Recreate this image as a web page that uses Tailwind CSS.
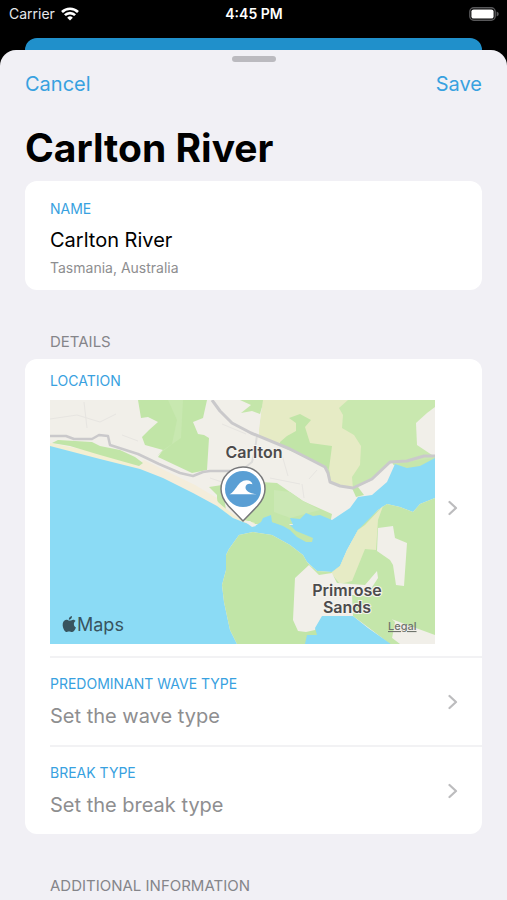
<!DOCTYPE html>
<html lang="en">
  <head>
    <meta charset="UTF-8" />
    <meta name="viewport" content="width=device-width, initial-scale=1.0" />
    <title>Carlton River</title>
    <script src="https://cdn.jsdelivr.net/npm/@tailwindcss/browser@4"></script>
  </head>
  <body class="bg-black font-[Inter,sans-serif]">
    <div class="flex min-h-screen flex-col">
      <!-- Status bar -->
      <header class="grid h-7 grid-cols-3 items-center pr-2 pl-[9px] text-sm text-white">
        <div class="flex items-center gap-[6px] text-gray-200">
          <span>Carrier</span>
          <svg class="h-[14px] w-[18px]" viewBox="0 0 18 14" fill="none" stroke="#fff" stroke-width="2.6" role="img" aria-label="Wi-Fi">
            <path d="M1 5a11.4 11.4 0 0 1 16 0" />
            <path d="M3.9 8.2a7.2 7.2 0 0 1 10.2 0" />
            <path d="M9 13.6 6.2 10.7a4 4 0 0 1 5.6 0Z" fill="#fff" stroke="none" />
          </svg>
        </div>
        <div class="text-center font-semibold whitespace-nowrap">4:45 PM</div>
        <svg class="h-[14px] w-[30px] justify-self-end" viewBox="0 0 30 14" role="img" aria-label="Battery full">
          <rect x=".8" y=".8" width="25.4" height="12.4" rx="4" fill="none" stroke="#58585a" stroke-width="1.4" />
          <rect x="2.4" y="2.4" width="22.2" height="9.2" rx="2.2" fill="#fff" />
          <path d="M27.6 4.6q2.2.8 2.2 2.4t-2.2 2.4z" fill="#58585a" />
        </svg>
      </header>

      <!-- Screen behind the sheet -->
      <div class="mx-[25px] mt-[10px] h-3 rounded-t-xl bg-[#2090cb]"></div>

      <!-- Sheet -->
      <main class="flex-1 rounded-t-2xl bg-[#f1f0f5] px-[25px] pt-[6px]">
        <div class="mx-auto h-[6px] w-11 rounded-full bg-[#bbbabf]"></div>

        <nav class="mt-2 flex justify-between text-xl leading-7 text-[#38a1e0]">
          <button type="button">Cancel</button>
          <button type="button">Save</button>
        </nav>

        <h1 class="mt-[25px] text-[39px] leading-[50px] font-bold text-black">Carlton River</h1>

        <section class="mt-2 rounded-xl bg-white px-[25px] pt-[18px] pb-3">
          <h2 class="text-sm text-[#38a1e0]">NAME</h2>
          <p class="mt-[9px] text-xl leading-6 text-black">Carlton River</p>
          <p class="mt-[6px] text-sm text-[#8e8e90]">Tasmania, Australia</p>
        </section>

        <h2 class="mt-[42px] px-[25px] text-[15px] leading-5 text-[#85858a]">DETAILS</h2>
        <section class="mt-[7px] rounded-xl bg-white pl-[25px]">
          <button type="button" class="flex w-full items-center border-b-2 border-[#f2f2f4] pt-3 pr-6 pb-3 text-left">
            <span class="flex-1">
              <span class="block text-sm text-[#38a1e0]">LOCATION</span>
              <svg class="mt-[9px] block w-full" viewBox="0 0 385 244" role="img" aria-label="Map of Carlton and Primrose Sands">
                <rect width="385" height="244" fill="#f1efe9" />

                <!-- Parks and farmland -->
                <path d="M88 0 91 18 98 17 108 22 99 30 92 37 95 45 113 50 108 57 125 65 142 73 157 70 159 38 154 35 148 34 143 22 153 18 157 0Z" fill="#c1e5a7" />
                <path d="M118 0H133L131 38 121 45 107 56 113 50 122 44 127 20Z" fill="#c8e8b0" />
                <path d="M190 0H214L210 14 202 11 191 13 201 5Z" fill="#c4e6aa" />
                <path d="M213 0H385V66L352 67 338 64 320 82 303 88 281 80 275 67 209 36Z" fill="#c9e8af" />
                <path d="M213 0H298L289 8 293 15 292 28 304 35 311 46 310 65 302 77 303 89 281 82 279 68 209 35 209 30Z" fill="#e6ebc5" />
                <path d="M239 18 250 14 261 20 255 27 260 43 282 46 279 69 230 45 230 42 237 36 246 31 246 23Z" fill="#c1e5a7" />
                <path d="M385 7 377 13 366 23 367 45 376 51 385 57Z" fill="#f1efe9" />
                <path d="M346 64 385 58V72H350Z" fill="#c6e6ab" />
                <path d="M303 89 320 81 342 62 345 68 338 90 318 98 309 96Z" fill="#f1efe9" />
                <path d="M302 88 308 87 314 95 306 97Z" fill="#c1e5a7" />
                <path d="M211 82 227 83 240 92 253 101 282 114 280 124 190 124 193 112 202 100Z" fill="#c4e6aa" />
                <path d="M224 90 240 92 253 101 270 110 240 118 224 112Z" fill="#cbe8b4" />
                <path d="M159 87 172 85 176 110 167 101 167 95Z" fill="#c1e5a7" />

                <!-- Beach and dunes -->
                <path d="M0 43 40 51 86 64 91 67 115 76 140 85 166 101 188 118 205 123 202 128 160 105 110 78 0 48Z" fill="#f3efd2" />
                <path d="M84 66 94 60 110 68 145 85 167 98 168 106 160 103Z" fill="#f4eddb" />
                <path d="M2 43 8 40 42 42 50 46 70 50 85 57 93 63 89 66 50 55 20 46Z" fill="#c1e5a7" />

                <!-- Minor streets -->
                <g fill="none" stroke="#e7e5e1">
                  <path d="M0 19 27 15 50 22 66 14M34 2 37 28M72 35 88 41M220 78 250 84M252 84 254 98M267 70 259 79M160 78 178 84M172 24 196 34M232 55 238 76" />
                  <path d="M207 35 205 50 202 62 192 70" stroke="#dddcda" stroke-width="2" />
                </g>

                <!-- Main roads -->
                <g fill="none" stroke="#cac9cb" stroke-width="3" stroke-linejoin="round">
                  <path d="M0 36H16L24 39 42 39 49 35 58 36 60 45 88 54 109 64 130 73 143 76 153 72 160 71 180 71" stroke-width="2.500" />
                  <path d="M162 0 170 11 182 23 201 33 240 49 275 67 278 73 280 82 290 86 303 88 322 79 340 62 357 61 374 56 385 56" />
                </g>

                <!-- Sea and river -->
                <path d="M0 46 50 59 90 69 113 78 143 93 167 106 183 118 193 122 205 126 211 122 213 118 221 115 222 122 233 125 243 125 240 118 250 119 256 113 263 116 270 115 282 120 300 108 308 97 322 95 337 82 345 64 357 68 370 66 385 58V98L370 104 363 112 350 107 337 104 328 110 316 124 308 130 297 150 290 166 282 172 267 171 257 162 253 155 240 145 222 135 203 132 189 135 179 149 176 155 176 170 172 185 174 202 180 230 187 244H0Z" fill="#8bdbf5" />
                <path d="M194 121 200 121 206 126 202 127Z" fill="#f1efe9" />
                <path d="M222 114 238 117 239 124 246 131 263 138 262 142 256 142 247 137 240 130 233 126 222 122Z" fill="#c4e6aa" />

                <!-- Southern shore -->
                <path d="M189 135 203 132 222 135 240 145 253 155 257 162 275 180 290 215V244H187L180 230 174 202 172 185 176 170 176 155 179 149Z" fill="#c1e5a7" />
                <path d="M308 130 328 110 337 104 350 107 363 112 370 104 385 98V244H340L303 215 270 215 262 167 267 171 282 172 290 166Z" fill="#c4e6aa" />
                <path d="M315 125 333 106 328 120 326 150 315 149 302 181 290 184 281 173 290 166 297 150 308 130Z" fill="#e6ebc5" />
                <path d="M328 128 343 126 345 138 357 143 354 186 346 185 343 165 340 160 327 151Z" fill="#f1efe9" />
                <path d="M245 178 259 165 269 175 282 173 287 183 315 185 327 171 328 178 317 195 313 215 272 217 265 230 256 232 248 231 243 220Z" fill="#f1efe9" />
                <path d="M333 216 385 235V244H350L333 231Z" fill="#f1efe9" />
                <path d="M255 244 257 235 267 235 265 228 272 216 303 216 318 228 341 244Z" fill="#8bdbf5" />
                <path d="M302 195 318 196 345 222 341 244 303 216Z" fill="#c4e6aa" />

                <!-- Pin -->
                <path d="M193 121 178.500 106C174 101 171 96 171 89a22 22 0 0 1 44 0c0 7-3 12-7.500 17Z" fill="#fff" stroke="#77787a" stroke-width="1.5" stroke-linejoin="round" />
                <circle cx="193" cy="89" r="18" fill="#5a9fd4" />
                <path d="M179.500 94.200C186 92 187.500 80.500 196.500 80.300 200 80.200 202 82 202.500 84.300 198.500 82.800 195.500 84.500 195.500 87.500 195.500 91 199.500 93.200 206.500 94.200Z" fill="#fff" />

                <!-- Labels -->
                <g class="font-[Inter,sans-serif] font-semibold" fill="#4c4b4c" stroke="#f5f3ee" stroke-width="2" paint-order="stroke" text-anchor="middle" font-size="16">
                  <text x="204" y="58">Carlton</text>
                  <text x="297" y="196">Primrose<tspan x="297" dy="17">Sands</tspan></text>
                </g>
                <path d="M21 220.500C23 219 25 219.800 25.500 221 23 222.500 23.600 226.500 26 227.500 25 230 23.500 232 22 232 20.800 232 20.400 231.400 19 231.400S17.300 232 16.200 232C14 231.500 10.500 223.500 14.500 220.400 16.500 219 18 220.400 19 220.600S20.500 220.600 21 220.500ZM18.800 219.800C18.600 218 20 216.200 22 216 22.200 218 20.600 219.800 18.800 219.800Z" fill="#38545f" />
                <text x="27" y="231" class="font-[Inter,sans-serif]" font-size="18" fill="#38545f">Maps</text>
                <text x="338" y="230" class="font-[Inter,sans-serif] underline" font-size="11" font-weight="500" fill="#6f746c">Legal</text>
              </svg>
            </span>
            <svg class="ml-[13px] h-4 w-[10px]" viewBox="0 0 10 16" fill="none" stroke="#bcbcbe" stroke-width="2.2" stroke-linecap="round" stroke-linejoin="round" aria-hidden="true">
              <path d="M1.500 2 8 8l-6.500 6" />
            </svg>
          </button>

          <button type="button" class="flex w-full items-center justify-between border-b-2 border-[#f2f2f4] pt-4 pr-6 pb-[15px] text-left">
            <span>
              <span class="block text-sm text-[#38a1e0]">PREDOMINANT WAVE TYPE</span>
              <span class="mt-2 block text-xl text-[#8e8e90]">Set the wave type</span>
            </span>
            <svg class="h-4 w-[10px]" viewBox="0 0 10 16" fill="none" stroke="#bcbcbe" stroke-width="2.2" stroke-linecap="round" stroke-linejoin="round" aria-hidden="true">
              <path d="M1.500 2 8 8l-6.500 6" />
            </svg>
          </button>

          <button type="button" class="flex w-full items-center justify-between pt-4 pr-6 pb-[15px] text-left">
            <span>
              <span class="block text-sm text-[#38a1e0]">BREAK TYPE</span>
              <span class="mt-2 block text-xl text-[#8e8e90]">Set the break type</span>
            </span>
            <svg class="h-4 w-[10px]" viewBox="0 0 10 16" fill="none" stroke="#bcbcbe" stroke-width="2.2" stroke-linecap="round" stroke-linejoin="round" aria-hidden="true">
              <path d="M1.500 2 8 8l-6.500 6" />
            </svg>
          </button>
        </section>

        <h2 class="mt-[42px] px-[25px] text-[15px] leading-5 text-[#85858a]">ADDITIONAL INFORMATION</h2>
      </main>
    </div>
  </body>
</html>
